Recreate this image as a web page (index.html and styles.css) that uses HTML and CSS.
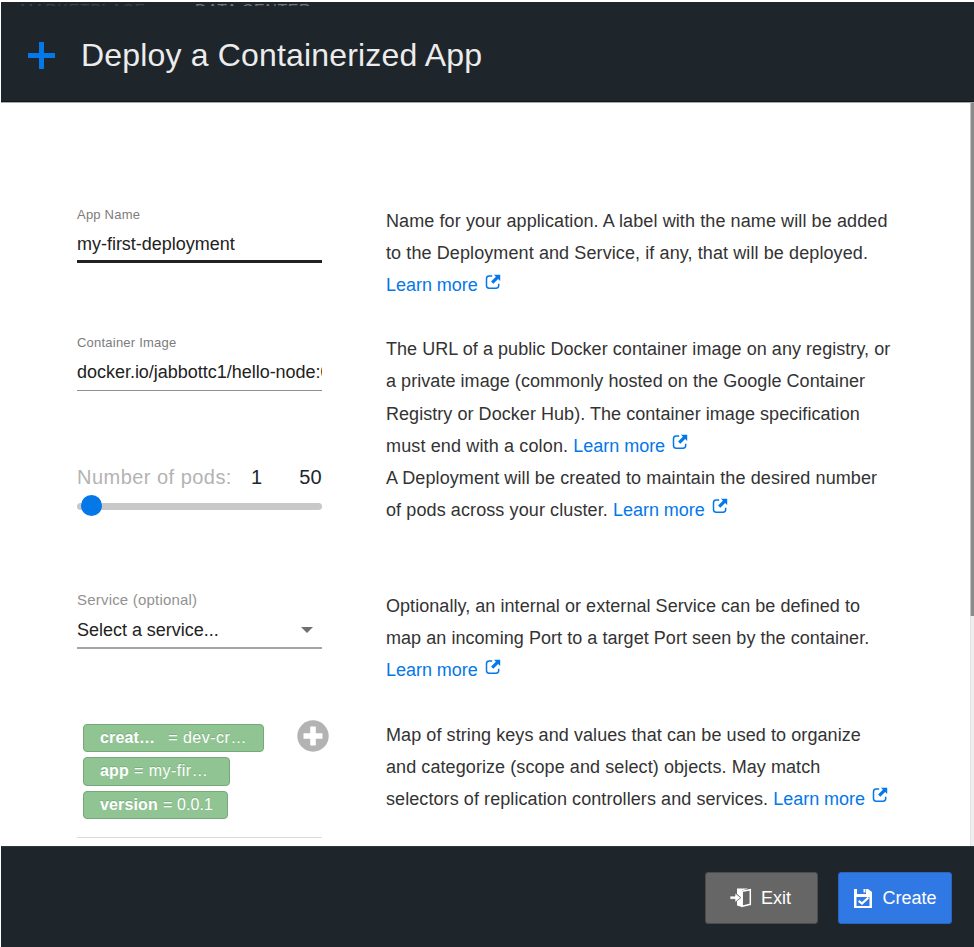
FILE: index.html
```html
<!DOCTYPE html>
<html lang="en">
<head>
<meta charset="utf-8">
<title>Deploy a Containerized App</title>
<link rel="stylesheet" href="styles.css">
</head>
<body>
<svg class="defs" width="0" height="0" aria-hidden="true">
  <symbol id="ext" viewBox="0 0 16 16">
    <path d="M7.2 2H4.2Q1.5 2 1.5 4.700V11.500Q1.500 14.200 4.200 14.200H11Q13.700 14.200 13.700 11.500V9.800" fill="none" stroke="currentColor" stroke-width="1.500"/>
    <path d="M9 .8H15.200V7L13.100 5 8.300 9.800 6.100 7.600 10.900 2.800Z" fill="currentColor"/>
  </symbol>
</svg>
<div class="dialog">
  <header class="header">
    <div class="backdrop"><span class="tab dim">MARKETPLACE</span><span class="tab">DATA CENTER</span></div>
    <div class="heading">
      <svg class="plus" viewBox="0 0 27 27"><path d="M11 0h5v11h11v5H16v11h-5V16H0v-5h11z" fill="#0477e9"/></svg>
      <h1 class="title">Deploy a Containerized App</h1>
    </div>
  </header>
  <main class="content">
    <div class="form">
      <div class="row">
        <div class="field">
          <label class="label">App Name</label>
          <div class="value name">my-first-deployment</div>
        </div>
        <p class="help">Name for your application. A label with the name will be added<br>to the Deployment and Service, if any, that will be deployed.<br><a>Learn more<svg class="ext"><use href="#ext"/></svg></a></p>
      </div>
      <div class="row">
        <div class="field">
          <label class="label">Container Image</label>
          <div class="value image">docker.io/jabbottc1/hello-node:0.0.1</div>
        </div>
        <p class="help tight">The URL of a public Docker container image on any registry, or<br>a private image (commonly hosted on the Google Container<br>Registry or Docker Hub). The container image specification<br><span class="last">must end with a colon. </span><a>Learn more<svg class="ext"><use href="#ext"/></svg></a></p>
      </div>
      <div class="row">
        <div class="field">
          <div class="pods"><span class="podlabel">Number of pods:</span><span>1</span><span class="max">50</span></div>
          <div class="slider"><div class="thumb"></div></div>
        </div>
        <p class="help">A Deployment will be created to maintain the desired number<br>of pods across your cluster. <a>Learn more<svg class="ext"><use href="#ext"/></svg></a></p>
      </div>
      <div class="row">
        <div class="field">
          <label class="label service">Service (optional)</label>
          <div class="value select"><span>Select a service...</span><i class="caret"></i></div>
        </div>
        <p class="help tight">Optionally, an internal or external Service can be defined to<br>map an incoming Port to a target Port seen by the container.<br><a>Learn more<svg class="ext"><use href="#ext"/></svg></a></p>
      </div>
      <div class="row">
        <div class="field labels">
          <div class="tags">
            <div class="tag creator"><b>creat…</b><span>= dev-cr…</span></div>
            <div class="tag app"><b>app</b><span>= my-fir…</span></div>
            <div class="tag version"><b>version</b><span>= 0.0.1</span></div>
          </div>
          <svg class="add" viewBox="0 0 32 32"><circle cx="16" cy="16" r="15.700" fill="#b3b3b3"/><path d="M13.200 6.500h5.600v6.700H25.500v5.600h-6.700V25.500h-5.600v-6.700H6.500v-5.600h6.700z" fill="#fff"/></svg>
        </div>
        <p class="help map">Map of string keys and values that can be used to organize<br>and categorize (scope and select) objects. May match<br>selectors of replication controllers and services. <a>Learn more<svg class="ext"><use href="#ext"/></svg></a></p>
      </div>
    </div>
    <div class="scroll"><div class="bar"></div></div>
  </main>
  <footer class="footer">
    <button class="btn exit"><svg class="icon-exit" viewBox="0 0 22 20"><path d="M7 .5H18L12 2.500V19L7 17.500V13L11 9.600 7 6Z" fill="#fff"/><path d="M12.200 3.200L20.300 1.700V16.300L12.200 18.300Z" fill="#666" stroke="#fff" stroke-width="1.500"/><path d="M0 8.100H5V5L10.800 9.700 5 14.400V11.300H0Z" fill="#fff" stroke="#666" stroke-width=".7"/></svg><span>Exit</span></button>
    <button class="btn create"><svg class="icon-save" viewBox="0 0 18 19"><path d="M0 0H3V5H12V0H14L18 3V19H0Z" fill="#fff"/><path d="M9.500 0H11.500V3.500H9.500Z" fill="#fff"/><path d="M2.500 8H15.500V17H2.500Z" fill="#3078e3"/><path d="M4.700 11.800L8 14.600 14.500 8.500" fill="none" stroke="#fff" stroke-width="2.200"/></svg><span>Create</span></button>
  </footer>
</div>
</body>
</html>
```

FILE: styles.css
```css
* { box-sizing: border-box; }
body {
  margin: 0;
  background: #fff;
  font-family: "Liberation Sans", Arial, sans-serif;
  color: #333;
}
.defs { display: block; }
.dialog {
  display: flex;
  flex-direction: column;
  height: 947px;
  padding: 2px 0 0 1px;
  overflow: hidden;
}
.header {
  height: 100px;
  flex: none;
  background: #1e252b;
  border-bottom: 1px solid #10161b;
}
.backdrop {
  display: flex;
  height: 4px;
  padding: 3px 0 0 19px;
  overflow: hidden;
  line-height: 12px;
}
.tab { width: 175px; font-size: 16px; letter-spacing: .6px; color: #70757a; }
.tab.dim { color: #3a4046; }
.heading {
  display: flex;
  align-items: center;
  height: 98px;
  padding: 2px 0 0 27px;
  margin-top: -1px;
}
.plus { width: 27px; height: 27px; }
.title {
  margin: 1px 0 0 26px;
  font-size: 32px;
  font-weight: 400;
  letter-spacing: .17px;
  color: #ececec;
}
.content {
  display: flex;
  flex: none;
  height: 744px;
  border-top: 1px solid #a5aaad;
  overflow: hidden;
}
.form { flex: 1; padding: 102px 0 0 76px; }
.row {
  display: grid;
  grid-template-columns: 245px 1fr;
  column-gap: 64px;
  height: 128.400px;
}
.help {
  margin: 0;
  font-size: 18px;
  line-height: 32.100px;
  letter-spacing: .1px;
  white-space: nowrap;
}
.help.tight { letter-spacing: .05px; }
.help.map { letter-spacing: .08px; }
.help .last { letter-spacing: .14px; }
.help a { color: #0477e9; letter-spacing: -.03px; }
.ext { width: 16px; height: 16px; margin-left: 7px; vertical-align: 1.500px; }
.label {
  display: block;
  height: 19px;
  padding-top: 1px;
  font-size: 13px;
  line-height: 18px;
  letter-spacing: .22px;
  color: #7c7c7c;
}
.value {
  height: 39px;
  padding-top: 9px;
  font-size: 18px;
  line-height: 22px;
  letter-spacing: -.02px;
  color: #222;
  white-space: nowrap;
  overflow: hidden;
}
.name { border-bottom: 3px solid #222; }
.image { border-bottom: 1px solid #8e8e8e; }
.label.service { font-size: 15px; letter-spacing: .2px; color: #929292; }
.select {
  display: flex;
  justify-content: space-between;
  align-items: center;
  height: 40px;
  padding: 4px 9px 0 0;
  border-bottom: 2px solid #a5a5a5;
}
.caret {
  border: 6px solid transparent;
  border-top-color: #707070;
  border-bottom: 0;
}
.pods {
  display: flex;
  height: 30px;
  font-size: 20px;
  line-height: 30px;
  color: #20262c;
}
.podlabel { width: 174px; color: #b3b3b3; letter-spacing: .47px; }
.max { margin-left: auto; letter-spacing: .3px; }
.slider {
  display: flex;
  align-items: center;
  height: 7px;
  margin-top: 11px;
  border-radius: 3.500px;
  background: #c8c8c8;
}
.thumb {
  width: 21px;
  height: 21px;
  margin: -1px 0 0 3.500px;
  border-radius: 50%;
  background: #0477e9;
}
.labels {
  display: flex;
  justify-content: space-between;
  height: 119px;
  border-bottom: 1px solid #dcdcdc;
}
.tags {
  display: flex;
  flex-direction: column;
  gap: 5px;
  padding: 5px 0 0 6px;
}
.tag {
  display: flex;
  align-items: center;
  height: 28.500px;
  padding-left: 16px;
  border: 1px solid #74aa77;
  border-radius: 4px;
  background: #90c493;
  color: #fff;
  font-size: 16px;
  letter-spacing: .15px;
  text-shadow: 0 -1px 0 #7caf7f;
  white-space: nowrap;
  gap: 5px;
}
.tag span { letter-spacing: .5px; }
.creator { width: 181px; gap: 13px; }
.app { width: 147px; }
.version { width: 145px; }
.tag.version span { letter-spacing: .1px; }
.add { flex: none; width: 32px; height: 32px; margin-right: -7px; margin-top: 1px; }
.scroll {
  flex: none;
  width: 4px;
  background: #efefef;
  border-left: 1px solid #e3e3e3;
}
.bar { height: 513px; margin-left: -1px; background: #8b8b8b; border-left: 1px solid #c4c4c4; }
.footer {
  display: flex;
  justify-content: flex-end;
  gap: 20px;
  height: 101px;
  flex: none;
  padding: 25px 22.500px 0 0;
  background: #1e252b;
  border-top: 1px solid #30373b;
}
.btn {
  display: flex;
  align-items: center;
  width: 113.500px;
  height: 52px;
  padding: 0 0 0 24.500px;
  border: 1px solid #4c4c4c;
  border-radius: 3px;
  background: #666;
  color: #fff;
  font: 18px "Liberation Sans", Arial, sans-serif;
}
.create { background: #3078e3; border-color: #2866bf; padding-left: 14.500px; }
.icon-exit { width: 22px; height: 20px; margin-right: 9px; flex: none; }
.icon-save { width: 18px; height: 19px; margin-right: 11px; flex: none; }
```
